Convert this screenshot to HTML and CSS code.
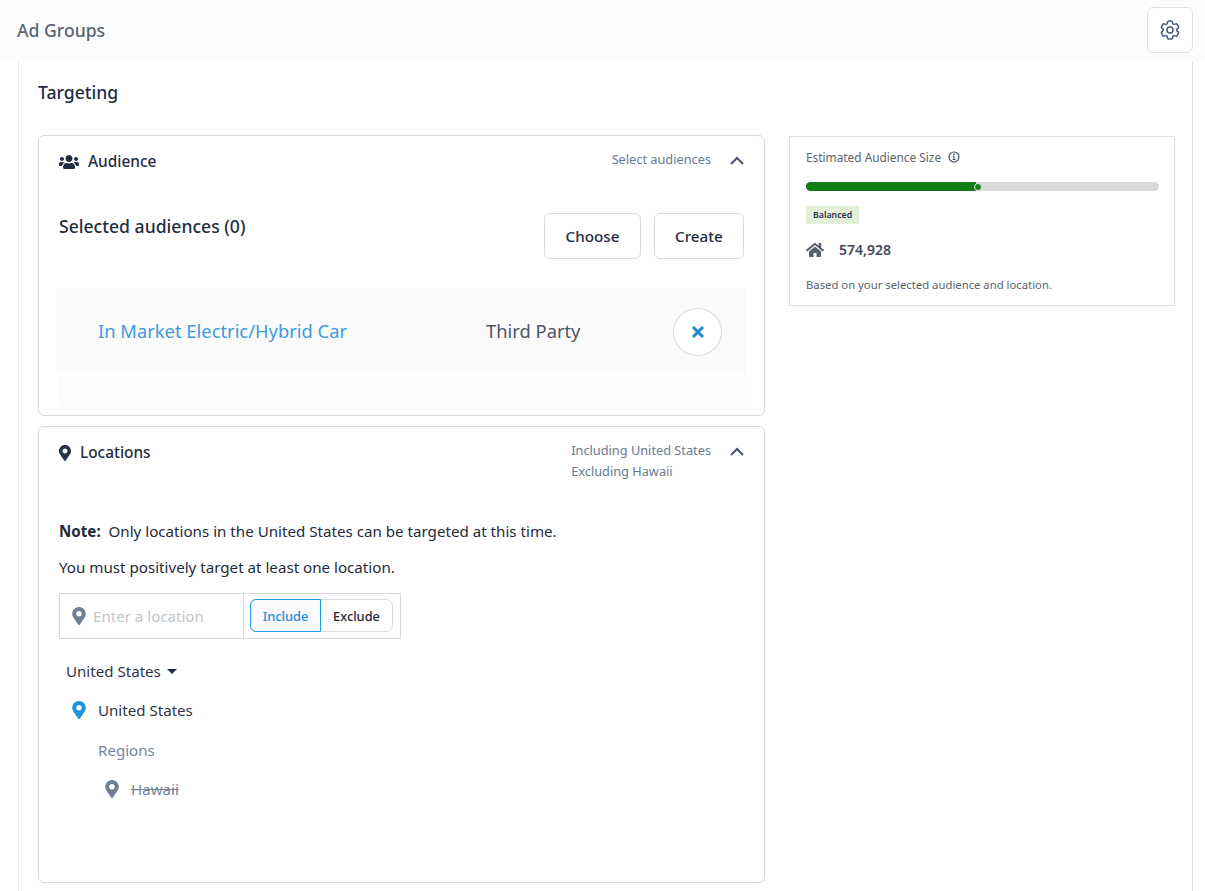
FILE: index.html
```html
<!DOCTYPE html>
<html lang="en">

<head>
    <meta charset="UTF-8" />
    <meta name="viewport" content="width=device-width, initial-scale=1.0" />
    <title>Ad Groups</title>
    <link rel="stylesheet" href="styles.css">
</head>

<body>
    <header class="top-bar">
        <h1 class="page-title">Ad Groups</h1>
        <button class="gear-button" aria-label="Settings">
            <svg class="gear-icon" viewBox="0 0 24 24" fill="none" stroke="currentColor" stroke-width="1.5" stroke-linecap="round" stroke-linejoin="round">
                <path d="M9.594 3.94c.09-.542.56-.94 1.11-.94h2.593c.55 0 1.02.398 1.11.94l.213 1.281c.063.374.313.686.645.87.074.04.147.083.22.127.325.196.72.257 1.075.124l1.217-.456a1.125 1.125 0 0 1 1.37.49l1.296 2.247a1.125 1.125 0 0 1-.26 1.431l-1.003.827c-.293.241-.438.613-.43.992a7.723 7.723 0 0 1 0 .255c-.008.378.137.75.43.991l1.004.827c.424.35.534.955.26 1.43l-1.298 2.247a1.125 1.125 0 0 1-1.369.491l-1.217-.456c-.355-.133-.75-.072-1.076.124a6.47 6.47 0 0 1-.22.128c-.331.183-.581.495-.644.869l-.213 1.281c-.09.543-.56.94-1.11.94h-2.594c-.55 0-1.019-.398-1.11-.94l-.213-1.281c-.062-.374-.312-.686-.644-.87a6.52 6.52 0 0 1-.22-.127c-.325-.196-.72-.257-1.076-.124l-1.217.456a1.125 1.125 0 0 1-1.369-.49l-1.297-2.247a1.125 1.125 0 0 1 .26-1.431l1.004-.827c.292-.24.437-.613.43-.991a6.932 6.932 0 0 1 0-.255c.007-.38-.138-.751-.43-.992l-1.004-.827a1.125 1.125 0 0 1-.26-1.43l1.297-2.247a1.125 1.125 0 0 1 1.37-.491l1.216.456c.356.133.751.072 1.076-.124.072-.044.146-.086.22-.128.332-.183.582-.495.644-.869l.214-1.28Z" />
                <path d="M15 12a3 3 0 1 1-6 0 3 3 0 0 1 6 0Z" />
            </svg>
        </button>
    </header>

    <main class="main-card">
        <h2 class="section-title">Targeting</h2>

        <div class="columns">
            <div class="left-col">
                <section class="panel panel-audience">
                    <div class="panel-head">
                        <div class="panel-name">
                            <svg class="users-icon" viewBox="0 0 640 512" fill="currentColor">
                                <path d="M96 224c35.3 0 64-28.7 64-64s-28.7-64-64-64-64 28.7-64 64 28.7 64 64 64zm448 0c35.3 0 64-28.7 64-64s-28.7-64-64-64-64 28.7-64 64 28.7 64 64 64zm32 32h-64c-17.6 0-33.5 7.1-45.1 18.6 40.3 22.1 68.9 62 75.1 109.4h66c17.7 0 32-14.3 32-32v-32c0-35.3-28.7-64-64-64zm-256 0c61.9 0 112-50.1 112-112S381.9 32 320 32 208 82.1 208 144s50.1 112 112 112zm76.8 32h-8.3c-20.8 10-43.9 16-68.5 16s-47.6-6-68.5-16h-8.3C179.6 288 128 339.6 128 403.2V432c0 26.5 21.5 48 48 48h288c26.5 0 48-21.5 48-48v-28.8c0-63.6-51.6-115.2-115.2-115.2zm-223.7-13.4C161.5 263.1 145.6 256 128 256H64c-35.3 0-64 28.7-64 64v32c0 17.7 14.3 32 32 32h65.9c6.3-47.4 34.9-87.3 75.2-109.4z" />
                            </svg>
                            Audience
                        </div>
                        <div class="panel-summary">Select audiences</div>
                        <svg class="chevron" viewBox="0 0 14 9" fill="none" stroke="currentColor" stroke-width="2">
                            <path d="M1 8l6-6 6 6" />
                        </svg>
                    </div>

                    <div class="selected-row">
                        <div class="selected-title">Selected audiences (0)</div>
                        <div class="selected-actions">
                            <button class="action-button">Choose</button>
                            <button class="action-button">Create</button>
                        </div>
                    </div>

                    <div class="audience-list">
                        <div class="audience-item">
                            <a class="audience-name">In Market Electric/Hybrid Car</a>
                            <span class="audience-type">Third Party</span>
                            <button class="remove-button" aria-label="Remove">
                                <svg viewBox="0 0 14 14" width="14" height="14" fill="none" stroke="currentColor" stroke-width="3">
                                    <path d="M2 2l10 10M12 2L2 12" />
                                </svg>
                            </button>
                        </div>
                        <div class="audience-foot"></div>
                    </div>
                </section>

                <section class="panel panel-locations">
                    <div class="panel-head">
                        <div class="panel-name">
                            <svg class="pin pin-head" viewBox="0 0 384 512" fill="currentColor">
                                <path d="M172.268 501.67C26.97 291.031 0 268.413 0 192 0 85.961 85.961 0 192 0s192 85.961 192 192c0 76.413-26.97 99.031-172.268 309.67-9.535 13.774-29.93 13.773-39.464 0zM192 272c44.183 0 80-35.817 80-80s-35.817-80-80-80-80 35.817-80 80 35.817 80 80 80z" />
                            </svg>
                            Locations
                        </div>
                        <div class="panel-summary">Including United States<br>Excluding Hawaii</div>
                        <svg class="chevron" viewBox="0 0 14 9" fill="none" stroke="currentColor" stroke-width="2">
                            <path d="M1 8l6-6 6 6" />
                        </svg>
                    </div>

                    <p class="note"><b>Note:</b>&nbsp; Only locations in the United States can be targeted at this time.</p>
                    <p class="note note-second">You must positively target at least one location.</p>

                    <div class="location-box">
                        <div class="location-input">
                            <svg class="pin pin-grey" viewBox="0 0 384 512" fill="currentColor">
                                <path d="M172.268 501.67C26.97 291.031 0 268.413 0 192 0 85.961 85.961 0 192 0s192 85.961 192 192c0 76.413-26.97 99.031-172.268 309.67-9.535 13.774-29.93 13.773-39.464 0zM192 272c44.183 0 80-35.817 80-80s-35.817-80-80-80-80 35.817-80 80 35.817 80 80 80z" />
                            </svg>
                            <span class="placeholder">Enter a location</span>
                        </div>
                        <div class="toggle-wrap">
                            <div class="toggle">
                                <span class="toggle-item toggle-on">Include</span>
                                <span class="toggle-item">Exclude</span>
                            </div>
                        </div>
                    </div>

                    <div class="country-select">United States <span class="caret"></span></div>
                    <div class="loc-row">
                        <svg class="pin pin-blue" viewBox="0 0 384 512" fill="currentColor">
                            <path d="M172.268 501.67C26.97 291.031 0 268.413 0 192 0 85.961 85.961 0 192 0s192 85.961 192 192c0 76.413-26.97 99.031-172.268 309.67-9.535 13.774-29.93 13.773-39.464 0zM192 272c44.183 0 80-35.817 80-80s-35.817-80-80-80-80 35.817-80 80 35.817 80 80 80z" />
                        </svg>
                        United States
                    </div>
                    <div class="regions-label">Regions</div>
                    <div class="loc-row loc-excluded">
                        <svg class="pin pin-grey" viewBox="0 0 384 512" fill="currentColor">
                            <path d="M172.268 501.67C26.97 291.031 0 268.413 0 192 0 85.961 85.961 0 192 0s192 85.961 192 192c0 76.413-26.97 99.031-172.268 309.67-9.535 13.774-29.93 13.773-39.464 0zM192 272c44.183 0 80-35.817 80-80s-35.817-80-80-80-80 35.817-80 80 35.817 80 80 80z" />
                        </svg>
                        <s>Hawaii</s>
                    </div>
                </section>
            </div>

            <aside class="size-card">
                <div class="size-title">
                    Estimated Audience Size
                    <svg class="info-icon" viewBox="0 0 12 12" fill="none" stroke="currentColor">
                        <circle cx="6" cy="6" r="5" stroke-width="1.2" />
                        <path d="M6 5.2v3.2M4.6 8.5h2.8M4.8 5.2H6" stroke-width="1.2" />
                        <circle cx="6" cy="3.3" r=".9" fill="currentColor" stroke="none" />
                    </svg>
                </div>
                <div class="size-bar">
                    <div class="size-fill"></div>
                    <div class="size-dot"></div>
                </div>
                <span class="size-badge">Balanced</span>
                <div class="size-count">
                    <svg class="home-icon" viewBox="0 0 576 512" fill="currentColor">
                        <path d="M280.37 148.26L96 300.11V464a16 16 0 0 0 16 16l112.06-.29a16 16 0 0 0 15.92-16V368a16 16 0 0 1 16-16h64a16 16 0 0 1 16 16v95.64a16 16 0 0 0 16 16.05L464 480a16 16 0 0 0 16-16V300L295.67 148.26a12.19 12.19 0 0 0-15.3 0zM571.6 251.47L488 182.56V44.05a12 12 0 0 0-12-12h-56a12 12 0 0 0-12 12v72.61L318.47 43a48 48 0 0 0-61 0L4.34 251.47a12 12 0 0 0-1.6 16.9l25.5 31A12 12 0 0 0 45.15 301l235.22-193.74a12.19 12.19 0 0 1 15.3 0L530.9 301a12 12 0 0 0 16.9-1.6l25.5-31a12 12 0 0 0-1.7-16.93z" />
                    </svg>
                    574,928
                </div>
                <div class="size-note">Based on your selected audience and location.</div>
            </aside>
        </div>
    </main>
</body>

</html>
```

FILE: styles.css
```css
body {
    margin: 0;
    height: 891px;
    overflow: hidden;
    font-family: "Noto Sans", "Open Sans", sans-serif;
    background: #ffffff;
    color: #1f2a3c;
}

.top-bar {
    display: flex;
    align-items: center;
    justify-content: space-between;
    height: 62px;
    padding: 0 12px 2px 17px;
    box-sizing: border-box;
    background: #fcfcfc;
}

.page-title {
    margin: 0;
    font-size: 17.6px;
    font-weight: 500;
    color: #5b6570;
}

.gear-button {
    display: flex;
    align-items: center;
    justify-content: center;
    width: 46px;
    height: 46px;
    padding: 0;
    border: 1px solid #dfe1e5;
    border-radius: 6px;
    background: #ffffff;
    color: #47587a;
}

.gear-icon {
    width: 24px;
    height: 24px;
}

.main-card {
    margin: 0 12px 0 18px;
    padding: 17px 16px 0 19px;
    height: 829px;
    box-sizing: border-box;
    border-left: 1px solid #e6e7ea;
    border-right: 1px solid #dcdfe4;
}

.section-title {
    margin: 0;
    font-size: 17.6px;
    line-height: 26px;
    font-weight: 500;
    color: #1f2d42;
}

.columns {
    display: flex;
    align-items: flex-start;
    gap: 24px;
    margin-top: 30px;
}

.left-col {
    display: flex;
    flex-direction: column;
    gap: 10px;
    width: 727px;
    flex-shrink: 0;
}

.panel {
    border: 1px solid #d6d9de;
    border-radius: 6px;
    box-sizing: border-box;
    background: #ffffff;
}

.panel-audience {
    height: 281px;
}

.panel-locations {
    height: 457px;
}

.panel-head {
    display: flex;
    align-items: flex-start;
    padding: 13px 20px 0 20px;
}

.panel-name {
    display: flex;
    align-items: center;
    flex: 1;
    margin-top: 1px;
    font-size: 15.4px;
    line-height: 24px;
    font-weight: 500;
    color: #1f2d42;
}

.users-icon {
    width: 20px;
    height: 16px;
    margin-right: 9px;
}

.pin {
    flex-shrink: 0;
    width: 12px;
    height: 16px;
}

.pin-head {
    margin-right: 9px;
    color: #263348;
}

.pin-grey {
    color: #6f7f94;
}

.pin-blue {
    color: #1c95dc;
}

.panel-summary {
    font-size: 12.75px;
    line-height: 21px;
    color: #6b7a90;
}

.chevron {
    width: 14px;
    height: 9px;
    margin: 7px 0 0 19px;
    color: #46556d;
}

.selected-row {
    display: flex;
    justify-content: space-between;
    padding: 39px 20px 0 20px;
}

.selected-title {
    font-size: 17.6px;
    line-height: 26px;
    font-weight: 500;
    color: #1f2d42;
}

.selected-actions {
    display: flex;
    gap: 13px;
}

.action-button {
    height: 46px;
    padding: 0 20.3px;
    font-family: inherit;
    font-size: 15.2px;
    font-weight: 500;
    color: #1f2d42;
    border: 1px solid #d9dbdf;
    border-radius: 6px;
    background: #ffffff;
}

.audience-list {
    margin: 29px 19px 0 17px;
}

.audience-item {
    display: flex;
    align-items: center;
    height: 84px;
    padding: 0 23px 0 42px;
    background: #fafafa;
}

.audience-foot {
    height: 35px;
    margin-left: 2px;
    background: #fcfcfd;
}

.audience-name {
    width: 388px;
    font-size: 18.35px;
    color: #3d9bdc;
}

.audience-type {
    flex: 1;
    font-size: 18.35px;
    color: #4c5666;
}

.remove-button {
    display: flex;
    align-items: center;
    justify-content: center;
    width: 49px;
    height: 48px;
    margin-top: 3px;
    padding: 0;
    border: 1px solid #d9dbdf;
    border-radius: 50%;
    background: #ffffff;
    color: #1d86cf;
}

.note {
    margin: 38px 20px 0;
    font-size: 15.15px;
    line-height: 22px;
    color: #1f2a3c;
}

.note b {
    font-weight: 700;
}

.note-second {
    margin-top: 14px;
}

.location-box {
    display: flex;
    width: 342px;
    height: 46px;
    margin: 15px 0 0 20px;
    border: 1px solid #d9dbdf;
    box-sizing: border-box;
}

.location-input {
    display: flex;
    align-items: center;
    gap: 7px;
    width: 184px;
    padding-left: 12px;
    box-sizing: border-box;
    border-right: 1px solid #d9dbdf;
}

.location-input .pin {
    width: 14px;
    height: 18px;
}

.placeholder {
    font-size: 15.1px;
    color: #c2c5ca;
}

.toggle-wrap {
    display: flex;
    align-items: center;
    padding: 0 0 1px 6px;
}

.toggle {
    display: flex;
    height: 33px;
    box-sizing: border-box;
    border: 1px solid #d9dbdf;
    border-radius: 7px;
}

.toggle-item {
    display: flex;
    align-items: center;
    justify-content: center;
    width: 71px;
    box-sizing: border-box;
    font-size: 12.8px;
    font-weight: 500;
    color: #1f2a3c;
}

.toggle-on {
    margin: -1px 0 -1px -1px;
    border: 1px solid #1c9be0;
    border-radius: 6px 0 0 6px;
    background: #f7f9fb;
    color: #1c8fd6;
}

.country-select {
    display: flex;
    align-items: center;
    gap: 6px;
    margin: 20px 0 0 27px;
    font-size: 15.1px;
    line-height: 24px;
    color: #2b3648;
}

.caret {
    width: 0;
    height: 0;
    margin-top: 1px;
    border-left: 5px solid transparent;
    border-right: 5px solid transparent;
    border-top: 5px solid #1f2a3c;
}

.loc-row {
    display: flex;
    align-items: center;
    gap: 12px;
    margin: 15px 0 0 33px;
    font-size: 15.1px;
    line-height: 24px;
    color: #2b3648;
}

.loc-row .pin {
    width: 14px;
    height: 18px;
}

.regions-label {
    margin: 16px 0 0 59px;
    font-size: 15.1px;
    line-height: 24px;
    color: #76849a;
}

.loc-excluded {
    margin-left: 66px;
    color: #76849a;
}

.size-card {
    width: 386px;
    height: 170px;
    padding: 11px 15px 0 16px;
    box-sizing: border-box;
    border: 1px solid #dcdee2;
    margin-top: 1px;
    flex-shrink: 0;
}

.size-title {
    display: flex;
    align-items: center;
    gap: 7px;
    font-size: 11.85px;
    line-height: 18px;
    color: #5b6570;
}

.info-icon {
    width: 12px;
    height: 12px;
    color: #46556d;
}

.size-bar {
    display: flex;
    align-items: center;
    height: 9px;
    margin-top: 16px;
    border-radius: 5px;
    background: #d9d9d9;
}

.size-fill {
    width: 170px;
    height: 9px;
    border-radius: 5px 0 0 5px;
    background: #0f7d14;
}

.size-dot {
    width: 8px;
    height: 8px;
    margin-left: -2px;
    box-sizing: border-box;
    border: 1px solid #d9e9d9;
    border-radius: 50%;
    background: #0f7d14;
}

.size-badge {
    display: block;
    width: fit-content;
    margin-top: 15px;
    padding: 0 7px;
    font-size: 8.8px;
    line-height: 18px;
    font-weight: 600;
    color: #2b3648;
    background: #e2efd9;
}

.size-count {
    display: flex;
    align-items: center;
    gap: 15px;
    margin-top: 14px;
    font-size: 14px;
    line-height: 24px;
    font-weight: 600;
    color: #3f4957;
}

.home-icon {
    width: 18px;
    height: 16px;
    color: #56606e;
}

.size-note {
    margin-top: 14px;
    font-size: 11.3px;
    line-height: 18px;
    color: #5b6570;
}
```
